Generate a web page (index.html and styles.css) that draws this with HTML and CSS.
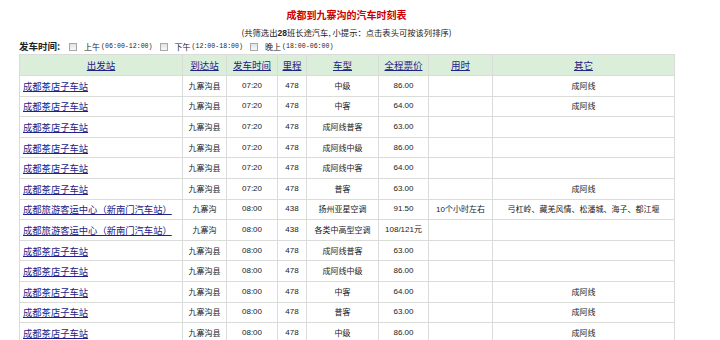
FILE: index.html
```html
<!DOCTYPE html>
<html lang="zh-CN">
<head>
<meta charset="utf-8">
<title>成都到九寨沟的汽车时刻表</title>
<link rel="stylesheet" href="styles.css">
</head>
<body>
<div class="wrap">
  <h1 class="title">成都到九寨沟的汽车时刻表</h1>
  <p class="sub">(共筛选出<b>28</b>班长途汽车, 小提示：点击表头可按该列排序)</p>
  <div class="filter">
    <b class="flabel">发车时间:</b>
    <label class="opt"><input type="checkbox" class="cb"><span>上午</span><span class="t">(06:00-12:00)</span></label>
    <label class="opt"><input type="checkbox" class="cb"><span>下午</span><span class="t">(12:00-18:00)</span></label>
    <label class="opt"><input type="checkbox" class="cb"><span>晚上</span><span class="t">(18:00-06:00)</span></label>
  </div>
  <table class="grid">
    <colgroup>
      <col class="c1"><col class="c2"><col class="c3"><col class="c4"><col class="c5"><col class="c6"><col class="c7"><col class="c8">
    </colgroup>
    <thead>
      <tr>
        <th><a href="#">出发站</a></th>
        <th><a href="#">到达站</a></th>
        <th><a href="#">发车时间</a></th>
        <th><a href="#">里程</a></th>
        <th><a href="#">车型</a></th>
        <th><a href="#">全程票价</a></th>
        <th><a href="#">用时</a></th>
        <th><a href="#">其它</a></th>
      </tr>
    </thead>
    <tbody>
      <tr><td class="st"><a href="#">成都茶店子车站</a></td><td>九寨沟县</td><td class="num">07:20</td><td class="num">478</td><td>中级</td><td class="num">86.00</td><td></td><td>成阿线</td></tr>
      <tr><td class="st"><a href="#">成都茶店子车站</a></td><td>九寨沟县</td><td class="num">07:20</td><td class="num">478</td><td>中客</td><td class="num">64.00</td><td></td><td>成阿线</td></tr>
      <tr><td class="st"><a href="#">成都茶店子车站</a></td><td>九寨沟县</td><td class="num">07:20</td><td class="num">478</td><td>成阿线普客</td><td class="num">63.00</td><td></td><td></td></tr>
      <tr><td class="st"><a href="#">成都茶店子车站</a></td><td>九寨沟县</td><td class="num">07:20</td><td class="num">478</td><td>成阿线中级</td><td class="num">86.00</td><td></td><td></td></tr>
      <tr><td class="st"><a href="#">成都茶店子车站</a></td><td>九寨沟县</td><td class="num">07:20</td><td class="num">478</td><td>成阿线中客</td><td class="num">64.00</td><td></td><td></td></tr>
      <tr><td class="st"><a href="#">成都茶店子车站</a></td><td>九寨沟县</td><td class="num">07:20</td><td class="num">478</td><td>普客</td><td class="num">63.00</td><td></td><td>成阿线</td></tr>
      <tr><td class="st"><a href="#">成都旅游客运中心（新南门汽车站）</a></td><td>九寨沟</td><td class="num">08:00</td><td class="num">438</td><td>扬州亚星空调</td><td class="num">91.50</td><td><span class="n">10</span>个小时左右</td><td>弓杠岭、藏羌风情、松潘城、海子、都江堰</td></tr>
      <tr><td class="st"><a href="#">成都旅游客运中心（新南门汽车站）</a></td><td>九寨沟</td><td class="num">08:00</td><td class="num">438</td><td>各类中高型空调</td><td><span class="n">108/121</span>元</td><td></td><td></td></tr>
      <tr><td class="st"><a href="#">成都茶店子车站</a></td><td>九寨沟县</td><td class="num">08:00</td><td class="num">478</td><td>成阿线普客</td><td class="num">63.00</td><td></td><td></td></tr>
      <tr><td class="st"><a href="#">成都茶店子车站</a></td><td>九寨沟县</td><td class="num">08:00</td><td class="num">478</td><td>成阿线中级</td><td class="num">86.00</td><td></td><td></td></tr>
      <tr><td class="st"><a href="#">成都茶店子车站</a></td><td>九寨沟县</td><td class="num">08:00</td><td class="num">478</td><td>中客</td><td class="num">64.00</td><td></td><td>成阿线</td></tr>
      <tr><td class="st"><a href="#">成都茶店子车站</a></td><td>九寨沟县</td><td class="num">08:00</td><td class="num">478</td><td>普客</td><td class="num">63.00</td><td></td><td>成阿线</td></tr>
      <tr><td class="st"><a href="#">成都茶店子车站</a></td><td>九寨沟县</td><td class="num">08:00</td><td class="num">478</td><td>中级</td><td class="num">86.00</td><td></td><td>成阿线</td></tr>
    </tbody>
  </table>
</div>
</body>
</html>
```

FILE: styles.css
```css
html, body {
  margin: 0;
  padding: 0;
  background: #ffffff;
}
body {
  font-family: "Noto Sans CJK SC", "Liberation Sans", sans-serif;
  font-size: 8px;
  color: #222222;
}
.wrap {
  width: 655px;
  margin-left: 19px;
  padding-top: 8px;
}
.title {
  margin: 0;
  text-align: center;
  font-size: 10px;
  line-height: 14px;
  font-weight: bold;
  color: #cc0000;
}
.sub {
  margin: 4px 0 0;
  text-align: center;
  font-size: 8.3px;
  line-height: 13px;
  color: #222222;
}
.sub b {
  font-family: "Liberation Sans", sans-serif;
  font-size: 8.5px;
}
.filter {
  display: flex;
  align-items: center;
  height: 13px;
  margin-bottom: 1px;
  font-size: 8px;
  line-height: 13px;
}
.flabel {
  font-size: 9.5px;
  font-weight: bold;
  margin-right: 9px;
}
.opt {
  display: flex;
  align-items: center;
  margin-right: 7px;
}
.cb {
  appearance: none;
  -webkit-appearance: none;
  width: 8px;
  height: 8px;
  margin: 0 7px 0 0;
  border: 1px solid #a8a8a8;
  background: linear-gradient(#e2e2e2, #f8f8f8);
  border-radius: 0;
}
.opt .t {
  font-family: "Liberation Mono", monospace;
  font-size: 6.6px;
  margin-left: 1px;
}
.grid {
  width: 655px;
  border-collapse: collapse;
  table-layout: fixed;
}
.c1 { width: 163px; }
.c2 { width: 44px; }
.c3 { width: 51px; }
.c4 { width: 29px; }
.c5 { width: 72px; }
.c6 { width: 50px; }
.c7 { width: 64px; }
.c8 { width: 182px; }
.grid th,
.grid td {
  border: 1px solid #d9dcd8;
  padding: 0 3px;
  text-align: center;
  white-space: nowrap;
  overflow: hidden;
  font-weight: normal;
  line-height: 12px;
}
.grid th {
  background: #daeeda;
  height: 20px;
  font-size: 9.5px;
}
.grid tbody tr {
  height: 20.6px;
}
.grid a {
  color: #222288;
  text-decoration: underline;
}
.grid td.st {
  text-align: left;
  font-size: 9.3px;
}
.num,
.n {
  font-family: "Liberation Sans", sans-serif;
  font-size: 8px;
}
```
